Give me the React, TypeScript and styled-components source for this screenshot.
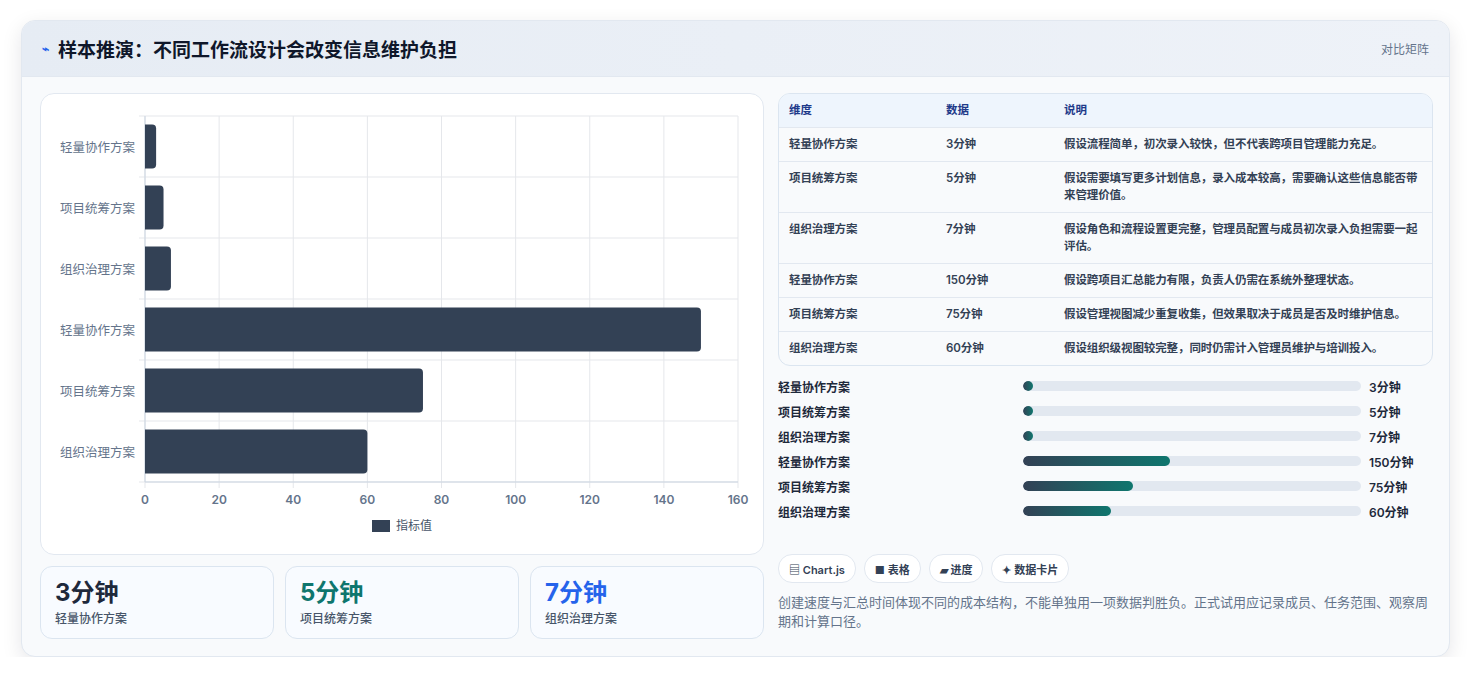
import React from "react";
import styled, { createGlobalStyle } from "styled-components";

const G = createGlobalStyle`
  body { margin:0; background:#fff; font-family: Inter, "Noto Sans CJK SC", sans-serif; }
`;
const Card = styled.div`
  margin: 20px 21px 0 21px; width: 1429px; height: 637px; box-sizing:border-box;
  border:1px solid #e2e8f0; border-radius:14px; background:#f8fafc; overflow:hidden;
  box-shadow: 0 6px 20px rgba(15,23,42,0.10);
`;
const Header = styled.div`
  height:55px; display:flex; align-items:center; justify-content:space-between;
  padding:0 20px; background:linear-gradient(90deg,#e6ecf4,#eef2f8); border-bottom:1px solid #e2e8f0;
`;
const Title = styled.div`display:flex; align-items:center; gap:9px; font-size:19px; font-weight:700; color:#0f172a;`;
const Small = styled.span`font-size:12px; color:#64748b;`;
const Body = styled.div`display:grid; grid-template-columns:724px 655px; gap:14px; padding:16px 18px;`;
const Col = styled.div`display:flex; flex-direction:column; gap:11px;`;
const ChartBox = styled.div`height:462px; border:1px solid #e2e8f0; border-radius:14px; background:#fff; box-sizing:border-box;`;
const Stats = styled.div`display:grid; grid-template-columns:repeat(3,1fr); gap:11px;`;
const Stat = styled.div`height:73px; border:1px solid #dbe5f0; border-radius:12px; background:#f8fbff; box-sizing:border-box; padding:10px 14px;`;
const StatV = styled.div<{c:string}>`font-size:24px; font-weight:700; color:${p=>p.c}; line-height:32px;`;
const StatL = styled.div`font-size:12px; color:#475569; font-weight:500;`;
const Table = styled.div`border:1px solid #dbe5f0; border-radius:12px; overflow:hidden; background:#f8fafc;`;
const Row = styled.div<{h?:boolean}>`display:grid; grid-template-columns:157px 118px 1fr; padding:8px 4px 8px 10px; font-size:11.5px;
  font-weight:600; line-height:17px; letter-spacing:-0.1px; color:${p=>p.h?"#1e3a8a":"#334155"}; background:${p=>p.h?"#eef5fd":"transparent"};
  border-top:${p=>p.h?"none":"1px solid #e2e8f0"};`;
const Bars = styled.div`display:flex; flex-direction:column; gap:7px; margin-top:11px;`;
const BRow = styled.div`display:grid; grid-template-columns:245px 338px 1fr; gap:0; align-items:center; font-size:12px; font-weight:600; color:#1e293b; height:18px;`;
const Track = styled.div`height:10px; background:#e2e8f0; border-radius:5px; overflow:hidden;`;
const Fill = styled.div`height:100%; border-radius:5px; background:linear-gradient(90deg,#334155,#0f766e);`;
const Val = styled.span`padding-left:8px;`;
const Chips = styled.div`display:flex; gap:8px; margin-top:34px;`;
const Chip = styled.div`height:27px; padding:0 10px; display:flex; align-items:center; border:1px solid #e2e8f0; border-radius:14px; background:#fff; font-size:11px; font-weight:600; color:#334155;`;
const Note = styled.div`font-size:13px; color:#64748b; line-height:19px; margin-top:10px;`;

const names=["轻量协作方案","项目统筹方案","组织治理方案","轻量协作方案","项目统筹方案","组织治理方案"];
const vals=[3,5,7,150,75,60];
const widths=[3,3,3,43.5,32.5,26];
const rows:[string,string,string][]=[
["轻量协作方案","3分钟","假设流程简单，初次录入较快，但不代表跨项目管理能力充足。"],
["项目统筹方案","5分钟","假设需要填写更多计划信息，录入成本较高，需要确认这些信息能否带来管理价值。"],
["组织治理方案","7分钟","假设角色和流程设置更完整，管理员配置与成员初次录入负担需要一起评估。"],
["轻量协作方案","150分钟","假设跨项目汇总能力有限，负责人仍需在系统外整理状态。"],
["项目统筹方案","75分钟","假设管理视图减少重复收集，但效果取决于成员是否及时维护信息。"],
["组织治理方案","60分钟","假设组织级视图较完整，同时仍需计入管理员维护与培训投入。"]];

function Chart(){
  const x0=104,x1=697,y0=22,y1=388,sx=(x1-x0)/160,rh=(y1-y0)/6;
  return <svg width="722" height="460" style={{display:"block"}} fontFamily='Inter,"Noto Sans CJK SC",sans-serif'>
    {[0,1,2,3,4,5,6,7,8].map(i=><line key={i} x1={x0+i*20*sx} x2={x0+i*20*sx} y1={y0} y2={y1+6} stroke="#e5e7eb"/>)}
    {[0,1,2,3,4,5,6].map(i=><line key={i} x1={x0-6} x2={x1} y1={y0+i*rh} y2={y0+i*rh} stroke="#e5e7eb"/>)}
    <line x1={x0} x2={x0} y1={y0} y2={y1} stroke="#cbd5e1"/>
    <line x1={x0} x2={x1} y1={y1} y2={y1} stroke="#cbd5e1"/>
    {vals.map((v,i)=>{const y=y0+i*rh+8.5;return <g key={i}>
      <path d={`M${x0} ${y}H${x0+v*sx-4}a4 4 0 0 1 4 4V${y+40}a4 4 0 0 1 -4 4H${x0}Z`} fill="#334155"/>
      <text x={x0-10} y={y+27} textAnchor="end" fontSize="12.5" fill="#64748b">{names[i]}</text></g>})}
    {[0,1,2,3,4,5,6,7,8].map(i=><text key={i} x={x0+i*20*sx} y={y1+22} textAnchor="middle" fontSize="12" fontWeight="600" fill="#64748b">{i*20}</text>)}
    <rect x="331" y="426" width="18" height="12" fill="#334155"/>
    <text x="355" y="436" fontSize="12" fill="#475569">指标值</text>
  </svg>;
}

export default function App(){
  return <><G/><Card>
    <Header><Title><span style={{color:"#2563eb",fontSize:12}}>⌁</span>样本推演：不同工作流设计会改变信息维护负担</Title><Small>对比矩阵</Small></Header>
    <Body>
      <Col>
        <ChartBox><Chart/></ChartBox>
        <Stats>
          <Stat><StatV c="#1e293b">3分钟</StatV><StatL>轻量协作方案</StatL></Stat>
          <Stat><StatV c="#0f766e">5分钟</StatV><StatL>项目统筹方案</StatL></Stat>
          <Stat><StatV c="#2563eb">7分钟</StatV><StatL>组织治理方案</StatL></Stat>
        </Stats>
      </Col>
      <div>
        <Table>
          <Row h><span>维度</span><span>数据</span><span>说明</span></Row>
          {rows.map((r,i)=><Row key={i}><span>{r[0]}</span><span>{r[1]}</span><span>{r[2]}</span></Row>)}
        </Table>
        <Bars>{names.map((n,i)=><BRow key={i}><span>{n}</span><Track><Fill style={{width:widths[i]+"%"}}/></Track><Val>{vals[i]}分钟</Val></BRow>)}</Bars>
        <Chips><Chip>▤ Chart.js</Chip><Chip>■ 表格</Chip><Chip>▰ 进度</Chip><Chip>✦ 数据卡片</Chip></Chips>
        <Note>创建速度与汇总时间体现不同的成本结构，不能单独用一项数据判胜负。正式试用应记录成员、任务范围、观察周期和计算口径。</Note>
      </div>
    </Body>
  </Card></>;
}
